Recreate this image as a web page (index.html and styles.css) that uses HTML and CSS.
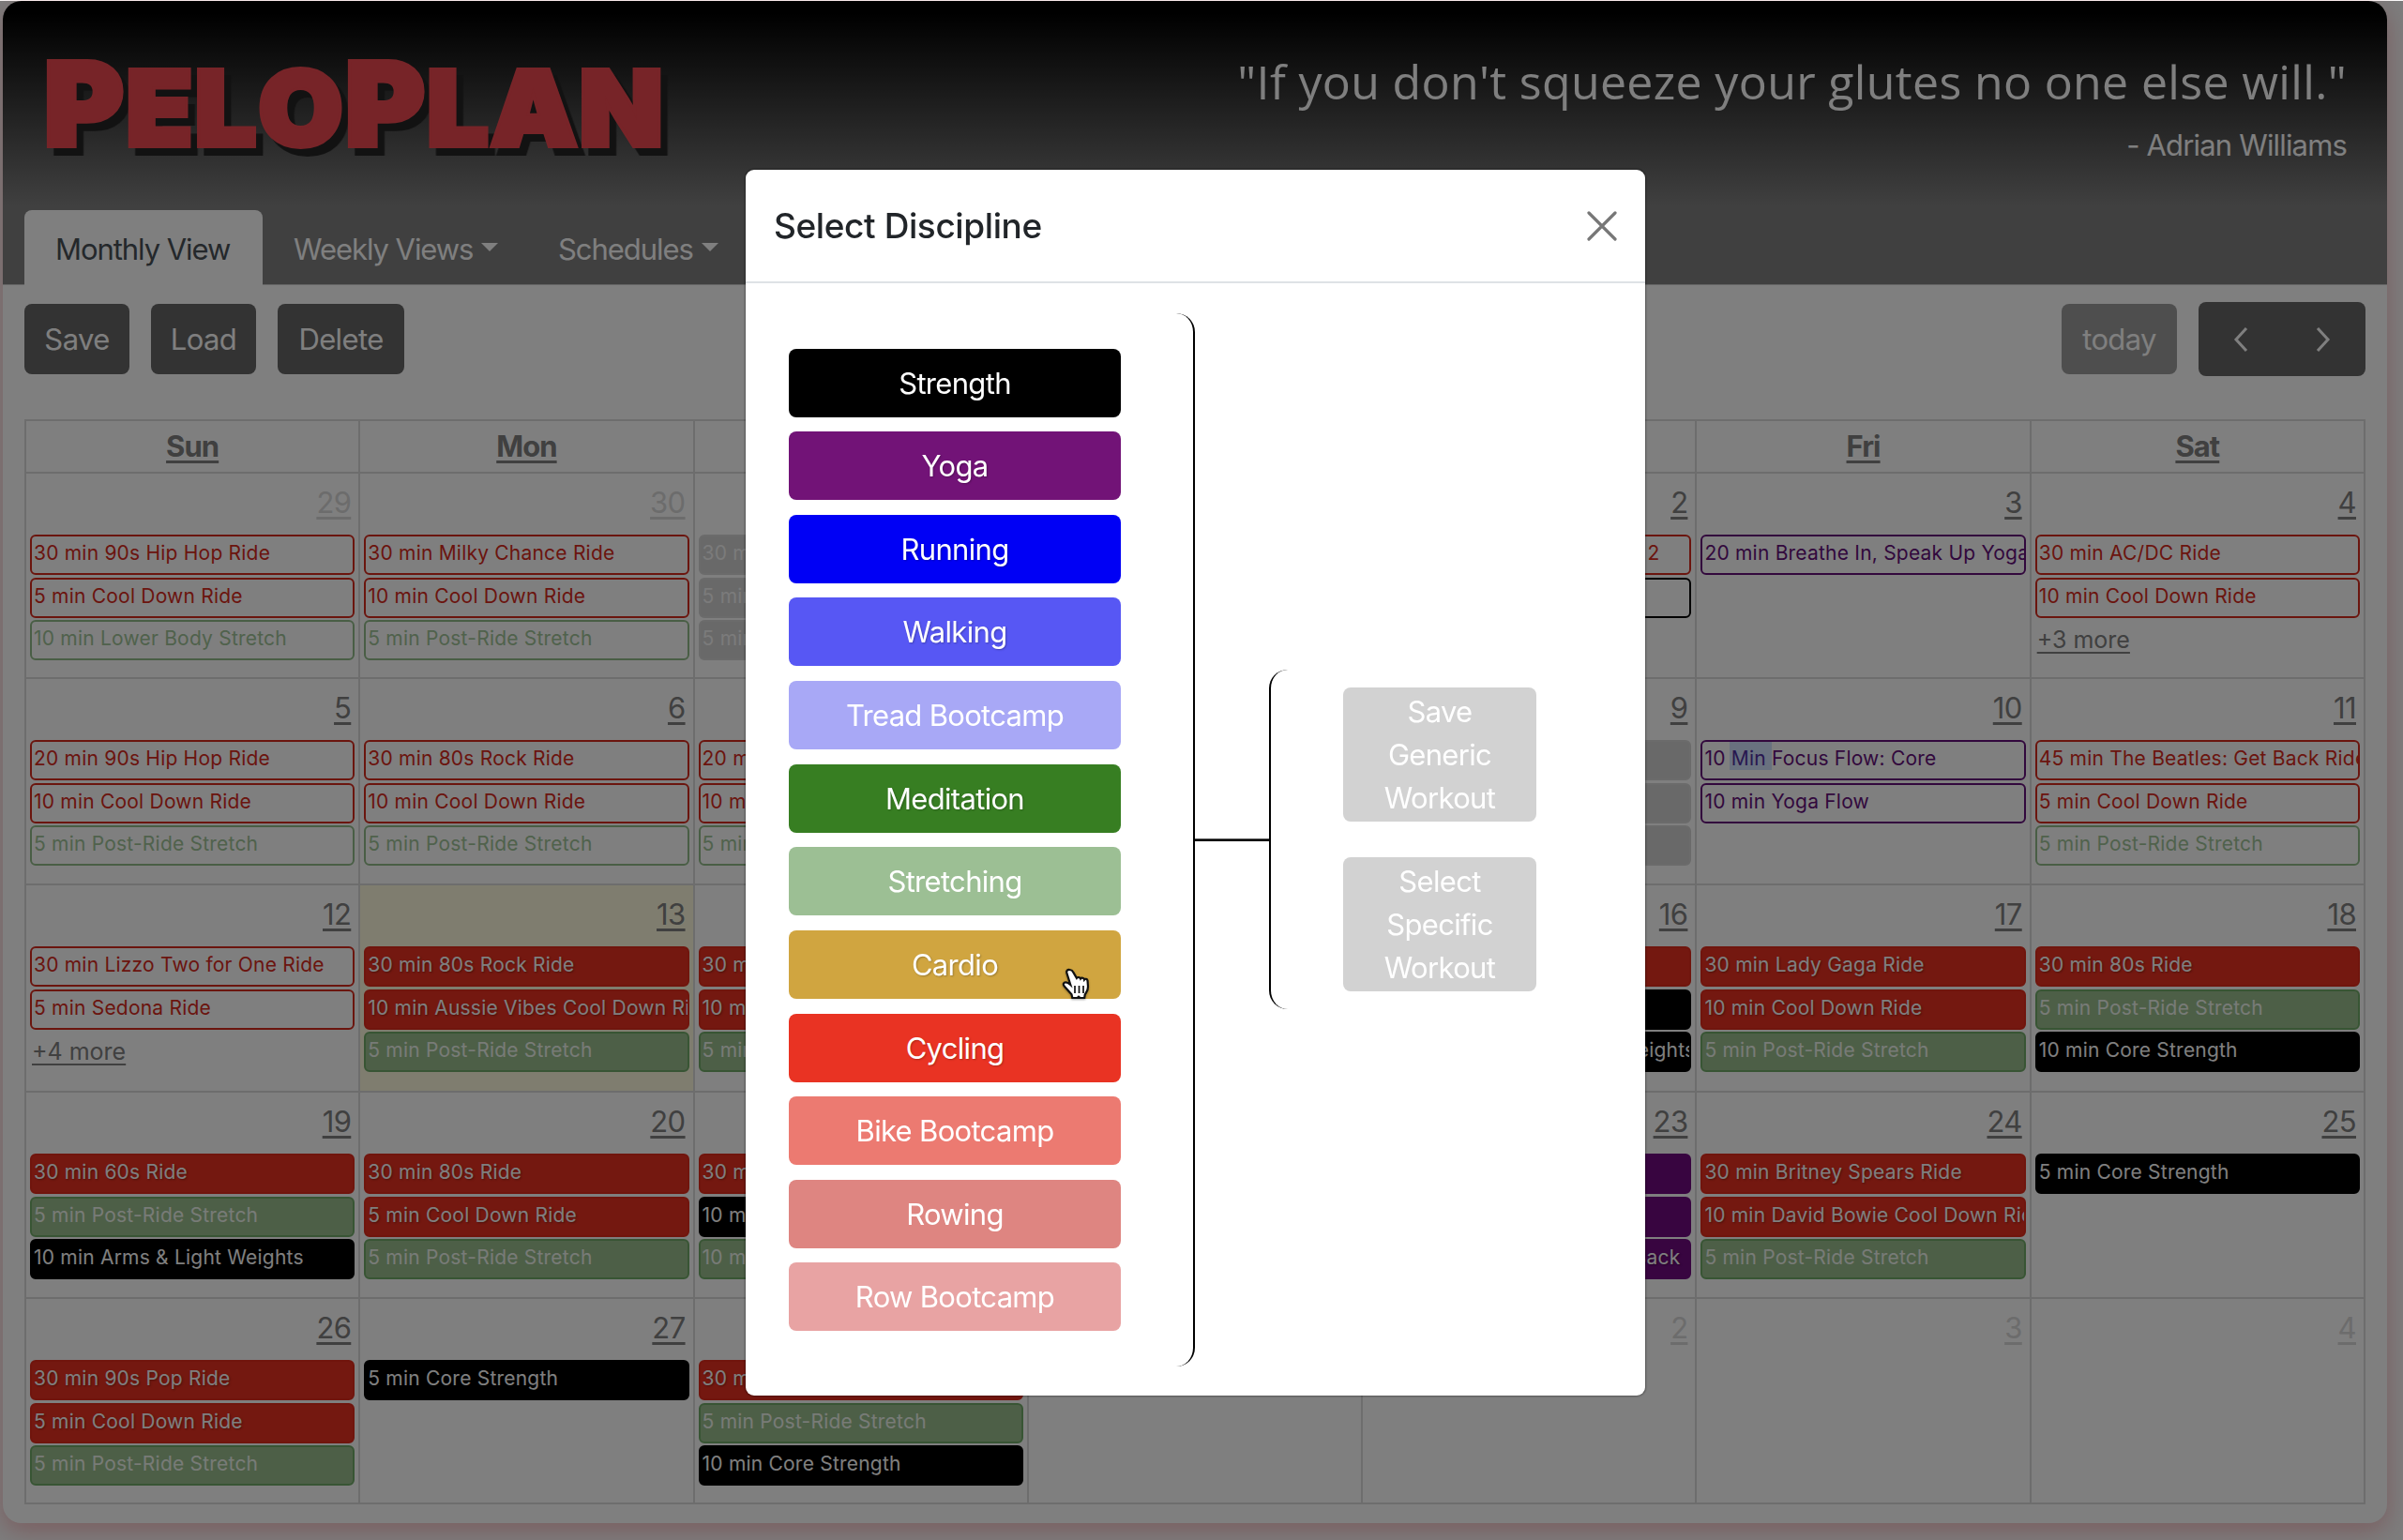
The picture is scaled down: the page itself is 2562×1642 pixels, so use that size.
FILE: index.html
```html
<!DOCTYPE html>
<html lang="en">
<head>
<meta charset="utf-8">
<title>PeloPlan</title>
<link rel="stylesheet" href="styles.css">
</head>
<body>
<main class="card">
  <header class="masthead">
    <div class="brand-row">
      <h1 class="logo"><span class="cap">P</span><span>E</span><span>L</span><span>O</span><span class="cap">P</span><span>L</span><span>A</span><span>N</span></h1>
      <div class="quote">
        <p class="quote-text">"If you don't squeeze your glutes no one else will."</p>
        <p class="quote-author">- Adrian Williams</p>
      </div>
    </div>
    <nav class="tabs">
      <a class="tab active">Monthly View</a>
      <a class="tab weekly">Weekly Views<i class="caret"></i></a>
      <a class="tab sched">Schedules<i class="caret"></i></a>
    </nav>
  </header>
  <div class="toolbar">
    <button class="btn w-save">Save</button>
    <button class="btn w-load">Load</button>
    <button class="btn w-delete">Delete</button>
    <span class="spacer"></span>
    <button class="btn today">today</button>
    <div class="pager">
      <svg width="16" height="28" viewBox="0 0 16 28"><path d="M14 2 3 14l11 12" /></svg>
      <svg width="16" height="28" viewBox="0 0 16 28"><path d="M2 2l11 12L2 26" /></svg>
    </div>
  </div>
  <section class="calendar">
    <div class="dow"><a>Sun</a></div><div class="dow"><a>Mon</a></div><div class="dow"><a>Tue</a></div><div class="dow"><a>Wed</a></div><div class="dow"><a>Thu</a></div><div class="dow"><a>Fri</a></div><div class="dow"><a>Sat</a></div>

    <div class="day other"><a class="num">29</a><div class="ev o-red">30 min 90s Hip Hop Ride</div><div class="ev o-red">5 min Cool Down Ride</div><div class="ev o-green">10 min Lower Body Stretch</div></div>
    <div class="day other"><a class="num">30</a><div class="ev o-red">30 min Milky Chance Ride</div><div class="ev o-red">10 min Cool Down Ride</div><div class="ev o-green">5 min Post-Ride Stretch</div></div>
    <div class="day other"><a class="num">31</a><div class="ev gray">30 min</div><div class="ev gray">5 min</div><div class="ev gray">5 min</div></div>
    <div class="day"><a class="num">1</a></div>
    <div class="day"><a class="num">2</a><div class="ev o-red end two">2</div><div class="ev o-black"></div></div>
    <div class="day"><a class="num">3</a><div class="ev o-purple">20 min Breathe In, Speak Up Yoga</div></div>
    <div class="day"><a class="num">4</a><div class="ev o-red">30 min AC/DC Ride</div><div class="ev o-red">10 min Cool Down Ride</div><a class="more">+3 more</a></div>

    <div class="day"><a class="num">5</a><div class="ev o-red">20 min 90s Hip Hop Ride</div><div class="ev o-red">10 min Cool Down Ride</div><div class="ev o-green">5 min Post-Ride Stretch</div></div>
    <div class="day"><a class="num">6</a><div class="ev o-red">30 min 80s Rock Ride</div><div class="ev o-red">10 min Cool Down Ride</div><div class="ev o-green">5 min Post-Ride Stretch</div></div>
    <div class="day"><a class="num">7</a><div class="ev o-red">20 min</div><div class="ev o-red">10 min</div><div class="ev o-green">5 min</div></div>
    <div class="day"><a class="num">8</a></div>
    <div class="day"><a class="num">9</a><div class="ev gray"></div><div class="ev gray"></div><div class="ev gray"></div></div>
    <div class="day"><a class="num">10</a><div class="ev o-purple">10 <span class="selected">Min </span>Focus Flow: Core</div><div class="ev o-purple">10 min Yoga Flow</div></div>
    <div class="day"><a class="num">11</a><div class="ev o-red">45 min The Beatles: Get Back Ride</div><div class="ev o-red">5 min Cool Down Ride</div><div class="ev o-green">5 min Post-Ride Stretch</div></div>

    <div class="day"><a class="num">12</a><div class="ev o-red">30 min Lizzo Two for One Ride</div><div class="ev o-red">5 min Sedona Ride</div><a class="more">+4 more</a></div>
    <div class="day now"><a class="num">13</a><div class="ev red">30 min 80s Rock Ride</div><div class="ev red">10 min Aussie Vibes Cool Down Ride</div><div class="ev green">5 min Post-Ride Stretch</div></div>
    <div class="day"><a class="num">14</a><div class="ev red">30 min</div><div class="ev red">10 min</div><div class="ev green">5 min</div></div>
    <div class="day"><a class="num">15</a></div>
    <div class="day"><a class="num">16</a><div class="ev red"></div><div class="ev black"></div><div class="ev black end weights">Weights</div></div>
    <div class="day"><a class="num">17</a><div class="ev red">30 min Lady Gaga Ride</div><div class="ev red">10 min Cool Down Ride</div><div class="ev green">5 min Post-Ride Stretch</div></div>
    <div class="day"><a class="num">18</a><div class="ev red">30 min 80s Ride</div><div class="ev green">5 min Post-Ride Stretch</div><div class="ev black">10 min Core Strength</div></div>

    <div class="day"><a class="num">19</a><div class="ev red">30 min 60s Ride</div><div class="ev green">5 min Post-Ride Stretch</div><div class="ev black">10 min Arms &amp; Light Weights</div></div>
    <div class="day"><a class="num">20</a><div class="ev red">30 min 80s Ride</div><div class="ev red">5 min Cool Down Ride</div><div class="ev green">5 min Post-Ride Stretch</div></div>
    <div class="day"><a class="num">21</a><div class="ev red">30 min</div><div class="ev black">10 min</div><div class="ev green">10 min</div></div>
    <div class="day"><a class="num">22</a></div>
    <div class="day"><a class="num">23</a><div class="ev purple"></div><div class="ev purple"></div><div class="ev purple end back">Back</div></div>
    <div class="day"><a class="num">24</a><div class="ev red">30 min Britney Spears Ride</div><div class="ev red">10 min David Bowie Cool Down Ride</div><div class="ev green">5 min Post-Ride Stretch</div></div>
    <div class="day"><a class="num">25</a><div class="ev black">5 min Core Strength</div></div>

    <div class="day"><a class="num">26</a><div class="ev red">30 min 90s Pop Ride</div><div class="ev red">5 min Cool Down Ride</div><div class="ev green">5 min Post-Ride Stretch</div></div>
    <div class="day"><a class="num">27</a><div class="ev black">5 min Core Strength</div></div>
    <div class="day"><a class="num">28</a><div class="ev red">30 min</div><div class="ev green">5 min Post-Ride Stretch</div><div class="ev black">10 min Core Strength</div></div>
    <div class="day other"><a class="num">1</a></div>
    <div class="day other"><a class="num">2</a></div>
    <div class="day other"><a class="num">3</a></div>
    <div class="day other"><a class="num">4</a></div>
  </section>
</main>

<div class="backdrop"></div>

<div class="modal">
  <div class="modal-head">
    <h2 class="modal-title">Select Discipline</h2>
    <svg class="close" width="32" height="32" viewBox="0 0 32 32"><path d="M2 2l28 28M30 2 2 30" /></svg>
  </div>
  <div class="modal-body">
    <div class="disciplines">
      <button class="disc strength">Strength</button>
      <button class="disc yoga">Yoga</button>
      <button class="disc running">Running</button>
      <button class="disc walking">Walking</button>
      <button class="disc tread">Tread Bootcamp</button>
      <button class="disc meditation">Meditation</button>
      <button class="disc stretching">Stretching</button>
      <button class="disc cardio">Cardio
        <svg class="pointer" width="30" height="34" viewBox="0 0 30 34"><path d="M8.500 2c-2.200-.4-3.900 1-3.200 3.300l4 12.700c-2-1.800-4.300-3.600-6.500-2.300-1.900 1.300-.9 3 .3 4.300l7.400 8.300.8 3.700h5.200l1.500-1.300 1.700 1.300h4.500l.5-3.500c1.500-2.500 3.500-4.500 3.300-8.500l-.5-6.500c-.4-2-2.600-2.200-3.500-1-.4-2-2.900-2.300-3.900-1-.6-1.800-3.300-1.900-4.200-.6L12.200 4.600C11.700 3.200 10 2.200 8.500 2z" fill="#fff" stroke="#111" stroke-width="2.200"/><path d="M14 19v8M18.500 19v8M23 19v8" fill="none" stroke="#111" stroke-width="1.700"/></svg>
      </button>
      <button class="disc cycling">Cycling</button>
      <button class="disc bike">Bike Bootcamp</button>
      <button class="disc rowing">Rowing</button>
      <button class="disc rowboot">Row Bootcamp</button>
    </div>
    <div class="joint"></div>
    <div class="choices">
      <button class="choice">Save Generic Workout</button>
      <button class="choice">Select Specific Workout</button>
    </div>
  </div>
</div>
</body>
</html>
```
FILE: styles.css
```css
* { box-sizing: border-box; }
body {
  margin: 0;
  height: 1642px;
  padding: 1px 17px 0 3px;
  overflow: hidden;
  background: #fafafa;
  font-family: Inter, "Liberation Sans", sans-serif;
  font-size: 31px;
  letter-spacing: -0.02em;
  color: #212529;
}
button { border: 0; padding: 0; font: inherit; letter-spacing: inherit; }
h1, h2, p { margin: 0; }

.card {
  height: 1623px;
  border-radius: 20px;
  overflow: hidden;
  background: #fff;
  box-shadow: 0 8px 26px rgba(235, 20, 40, .28);
}
.masthead {
  height: 303px;
  display: flex;
  flex-direction: column;
  justify-content: space-between;
  background: linear-gradient(#000 0, #000 12px, #808080 218px);
  border-bottom: 1px solid #c8c8c8;
}
.brand-row { display: flex; justify-content: space-between; padding: 46px 43px 0 44px; height: 222px; }
.logo {
  display: flex;
  align-items: baseline;
  height: 120px;
  margin-top: 4px;
  line-height: 120px;
  font-size: 110px;
  font-weight: 900;
  letter-spacing: 2.500px;
  color: #ee4850;
  -webkit-text-stroke: 6px #ee4850;
  paint-order: stroke fill;
  filter: drop-shadow(7px 8px 0 #242424);
  transform: scaleX(1.050);
  transform-origin: 0 50%;
}
.logo .cap { font-size: 123px; }
.quote { text-align: right; color: #fff; }
.quote-text { font-family: "Open Sans", sans-serif; font-size: 50px; letter-spacing: 0.35px; line-height: 80px; white-space: nowrap; }
.quote-author { line-height: 46px; margin-top: 5px; letter-spacing: -0.027em; }

.tabs { display: flex; height: 80px; padding-left: 23px; flex: none; margin-bottom: -1px; letter-spacing: -0.034em; }
.tab { display: flex; align-items: center; color: #fff; padding: 3px 0 0 33px; white-space: nowrap; }
.tab.active { width: 254px; background: #fff; color: #495057; border-radius: 8px 8px 0 0; }
.tab.weekly { width: 282px; }
.caret { margin: -4px 0 0 9px; border: 9px solid transparent; border-top-color: #fff; border-bottom: 0; }

.toolbar { display: flex; align-items: center; height: 143px; padding: 0 23px 28px; }
.btn { height: 75px; border-radius: 8px; background: #666; color: #fff; }
.w-save { width: 112px; margin-right: 23px; }
.w-load { width: 112px; margin-right: 23px; }
.w-delete { width: 135px; }
.spacer { flex: 1; }
.today { width: 123px; background: #9d9d9d; margin-right: 23px; }
.pager { width: 178px; height: 79px; border-radius: 8px; background: #666; display: flex; align-items: center; justify-content: space-between; padding: 0 37px; }
.pager svg { fill: none; stroke: #fff; stroke-width: 3; }

.calendar {
  margin: 0 23px;
  display: grid;
  grid-template-columns: repeat(7, 1fr);
  grid-template-rows: 56px 219px 220px 221px 220px 219px;
  border-left: 2px solid #dadada;
  border-top: 2px solid #dadada;
}
.dow, .day { border-right: 2px solid #dadada; border-bottom: 2px solid #dadada; min-width: 0; }
.dow { text-align: center; font-weight: 700; line-height: 54px; color: #888; letter-spacing: -0.03em; }
.dow a, .num, .more { text-decoration: underline; text-decoration-thickness: 3px; text-underline-offset: 4px; text-decoration-skip-ink: none; color: #808080; }
.day { display: flex; flex-direction: column; padding: 9px 4px 0; gap: 2.500px; }
.day.now { background: #fffadf; }
.num { align-self: flex-end; line-height: 44px; height: 53.500px; padding-right: 4px; }
.other .num { color: #d8d8d8; }
.ev {
  flex: none;
  height: 43px;
  padding: 0 0 0 2px;
  line-height: 36px;
  border: 2px solid;
  border-radius: 6px;
  font-size: 21px;
  letter-spacing: 0.010em;
  white-space: nowrap;
  overflow: hidden;
  color: #fff;
  text-shadow: 1px 1px 2px rgba(0, 0, 0, .35);
}
.red { background: #e83020; border-color: #e02a1a; }
.green { background: #9abe8e; border-color: #70aa68; color: #f0f6ee; text-shadow: none; }
.black { background: #000; border-color: #000; }
.purple { background: #700a80; border-color: #700a80; }
.gray { background: #d2d2d2; border-color: #d6d6d6; color: #f6f6f6; text-shadow: none; }
.o-red, .o-green, .o-black, .o-purple { text-shadow: none; }
.o-red { color: #d62a1c; border-color: #d62a1c; }
.o-green { color: #a0c498; border-color: #92bd8a; }
.o-black { color: #000; border-color: #000; }
.o-purple { color: #65107a; border-color: #65107a; }
.end { text-align: right; }
.two { padding-right: 32px; }
.back { padding-right: 10px; }
.weights { direction: rtl; padding: 0; text-indent: -6px; }
.selected { display: inline-block; height: 30px; line-height: 36px; vertical-align: top; background: #d2e2ff; color: #5030a0; white-space: pre; margin-left: -2px; padding-left: 2px; }
.more { font-size: 25px; letter-spacing: 0; line-height: 42px; text-decoration-thickness: 2px; align-self: flex-start; padding-left: 2px; }

.backdrop { position: fixed; inset: 1px 0 0; background: rgba(0, 0, 0, .5); }

/* Dialog floats over the planner */
.modal {
  position: fixed;
  left: 795px;
  top: 181px;
  width: 959px;
  height: 1307px;
  background: #fff;
  border-radius: 9px;
  box-shadow: 0 0 2px 1px rgba(0, 0, 0, .35);
}
.modal-head { height: 121px; display: flex; align-items: center; justify-content: space-between; padding: 0 30px; border-bottom: 2px solid #dee2e6; }
.modal-title { font-size: 37px; font-weight: 500; letter-spacing: -0.011em; }
.close { fill: none; stroke: #777; stroke-width: 3.200; stroke-linecap: round; }
.modal-body { display: flex; align-items: center; height: 1186px; padding-bottom: 0; }
.disciplines {
  width: 479px;
  height: 1123px;
  padding: 38px 77px 37px 46px;
  display: flex;
  flex-direction: column;
  justify-content: space-between;
  border-right: 2.500px solid #000;
  border-radius: 0 20px 20px 0;
}
.disc { height: 73px; border-radius: 8px; color: #fff; text-shadow: 1px 1px 2px rgba(0, 0, 0, .25); letter-spacing: -0.022em; position: relative; }
.strength { background: #000; }
.yoga { background: #721377; }
.running { background: #0000f5; }
.walking { background: #5757f4; }
.tread { background: #a8a8f6; }
.meditation { background: #377e22; }
.stretching { background: #9cbf94; }
.cardio { background: #d0a540; }
.cycling { background: #e93323; }
.bike { background: #ec7a71; }
.rowing { background: #de8581; }
.rowboot { background: #e8a3a3; }
.tread, .stretching, .bike, .rowing, .rowboot { text-shadow: none; }
.pointer { position: absolute; left: 291px; top: 40px; filter: drop-shadow(0 1px 1px rgba(0, 0, 0, .35)); }
.joint { width: 79px; height: 3px; background: #000; border-top: 1px solid #555; }
.choices {
  height: 362px;
  padding: 0 0 0 77px;
  display: flex;
  flex-direction: column;
  justify-content: center;
  gap: 38px;
  border-left: 2.500px solid #000;
  border-radius: 20px 0 0 20px;
}
.choice { width: 206px; height: 143px; padding: 0 30px; line-height: 46px; border-radius: 8px; background: #d2d2d2; color: #fff; letter-spacing: -0.022em; }
```
